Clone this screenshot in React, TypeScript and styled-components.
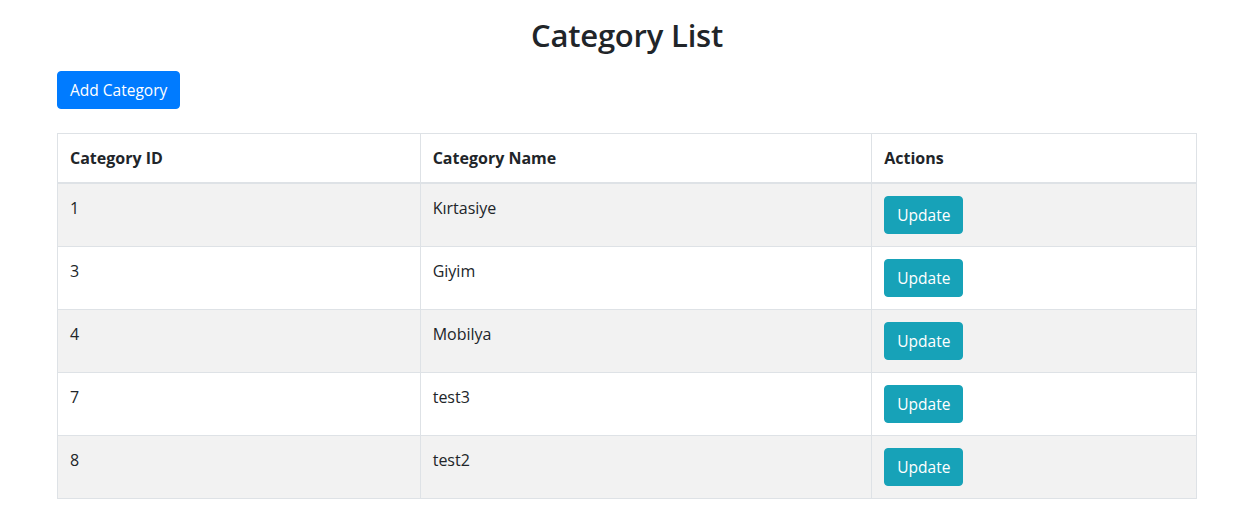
import React from "react";
import styled, { createGlobalStyle } from "styled-components";

const Global = createGlobalStyle`
  html, body { margin: 0; padding: 0; background: #fff; }
  body {
    font-family: "Segoe UI", "Open Sans", "Noto Sans", sans-serif;
    font-size: 16px;
    line-height: 1.5;
    color: #212529;
  }
  * { box-sizing: border-box; }
`;

const Container = styled.div`
  width: 1143px;
  margin: 0 auto;
  padding: 16px 0 0 3px;
`;

const Title = styled.h2`
  margin: 0 0 17px;
  text-align: center;
  font-size: 31px;
  font-weight: 600;
  letter-spacing: -0.2px;
  line-height: 38px;
`;

const Button = styled.button<{ $variant: "primary" | "info" }>`
  display: inline-block;
  font-family: inherit;
  font-size: 15.5px;
  line-height: 24px;
  padding: 6px 12px;
  border-radius: 4px;
  border: 1px solid ${(p) => (p.$variant === "primary" ? "#007bff" : "#17a2b8")};
  background: ${(p) => (p.$variant === "primary" ? "#007bff" : "#17a2b8")};
  color: #fff;
  cursor: pointer;
`;

const Toolbar = styled.div`
  margin-bottom: 24px;
`;

const Table = styled.table`
  width: 100%;
  border-collapse: collapse;
  border: 1px solid #dee2e6;
`;

const Th = styled.th<{ $w: number }>`
  width: ${(p) => p.$w}px;
  text-align: left;
  font-weight: 700;
  padding: 12px;
  border: 1px solid #dee2e6;
  border-bottom-width: 2px;
  vertical-align: bottom;
`;

const Row = styled.tr<{ $striped: boolean }>`
  background: ${(p) => (p.$striped ? "#f2f2f2" : "#fff")};
`;

const Td = styled.td`
  padding: 12px;
  border: 1px solid #dee2e6;
  vertical-align: top;
`;

const rows = [
  { id: 1, name: "Kırtasiye" },
  { id: 3, name: "Giyim" },
  { id: 4, name: "Mobilya" },
  { id: 7, name: "test3" },
  { id: 8, name: "test2" },
];

export default function App() {
  return (
    <>
      <Global />
      <Container>
        <Title>Category List</Title>
        <Toolbar>
          <Button $variant="primary">Add Category</Button>
        </Toolbar>
        <Table>
          <thead>
            <tr>
              <Th $w={363}>Category ID</Th>
              <Th $w={452}>Category Name</Th>
              <Th $w={325}>Actions</Th>
            </tr>
          </thead>
          <tbody>
            {rows.map((r, i) => (
              <Row key={r.id} $striped={i % 2 === 0}>
                <Td>{r.id}</Td>
                <Td>{r.name}</Td>
                <Td>
                  <Button $variant="info">Update</Button>
                </Td>
              </Row>
            ))}
          </tbody>
        </Table>
      </Container>
    </>
  );
}
